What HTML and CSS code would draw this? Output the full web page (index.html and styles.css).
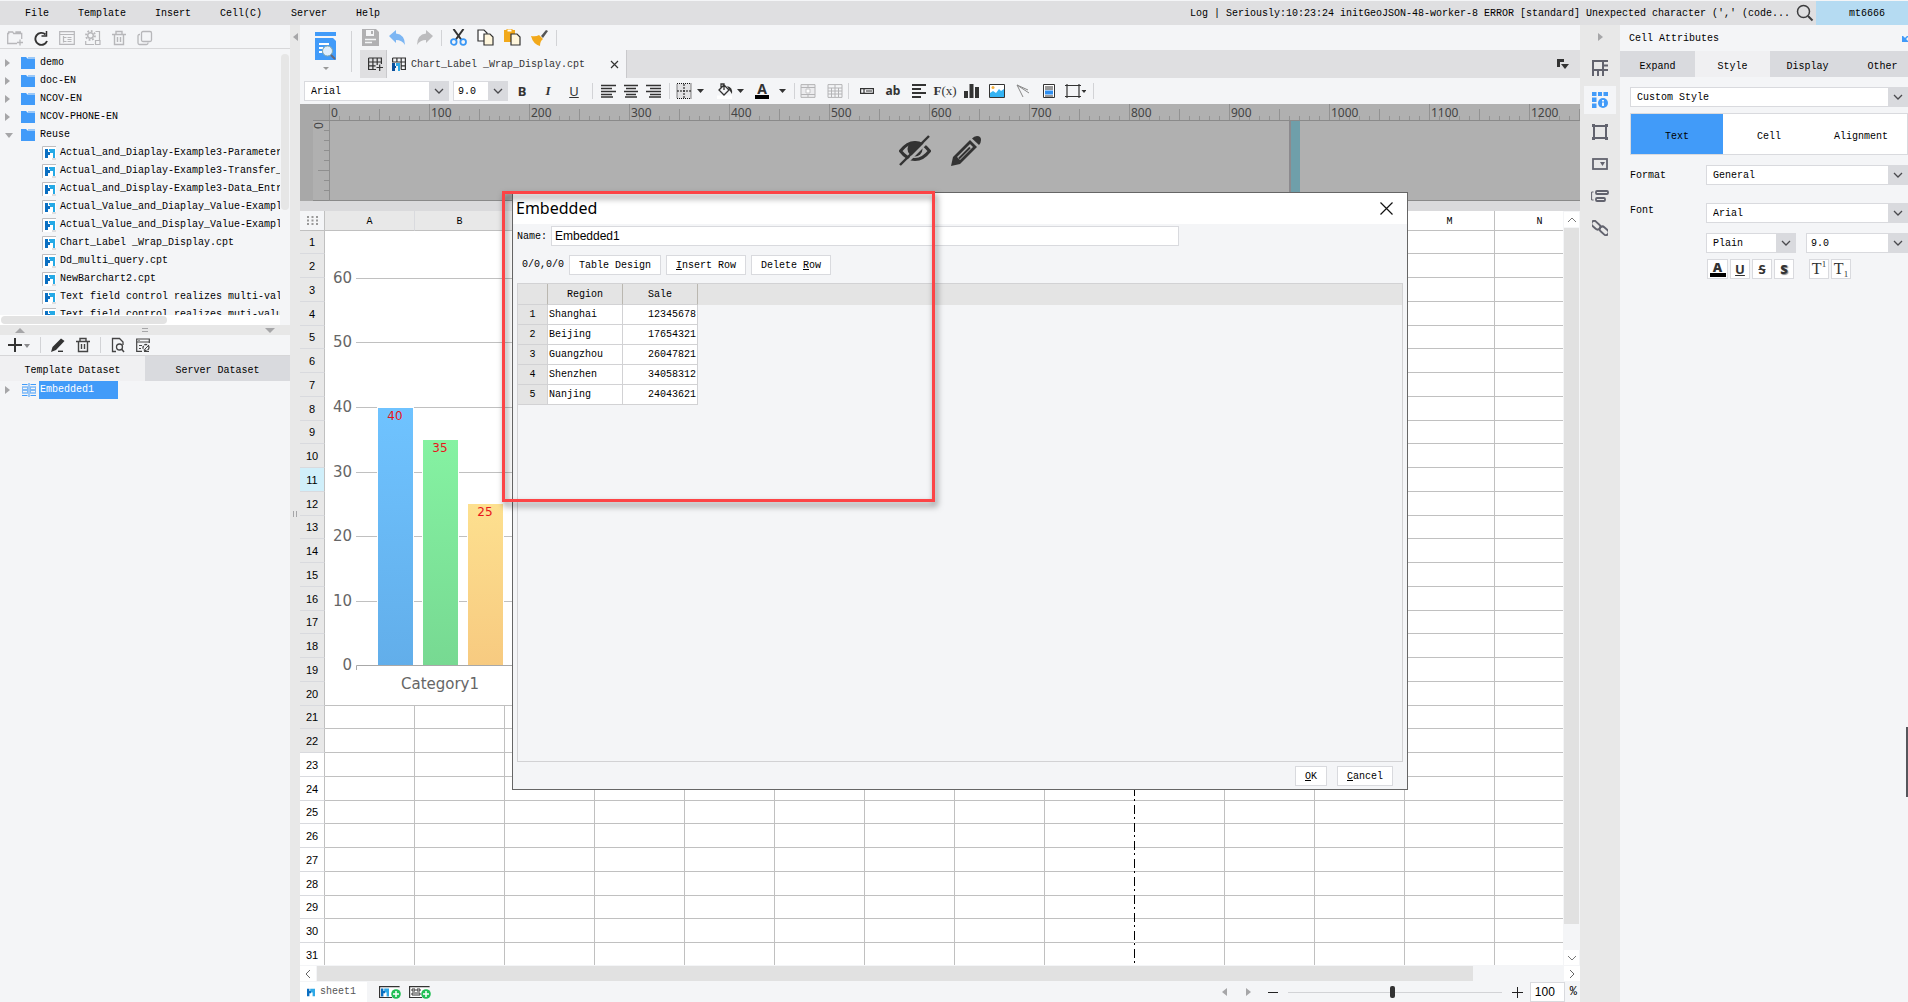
FILE: index.html
```html
<!DOCTYPE html>
<html lang="en">
<head>
<meta charset="utf-8">
<title>Report Designer</title>
<link rel="stylesheet" href="styles.css">
</head>
<body>
<svg class="defs" width="0" height="0" aria-hidden="true">
  <defs>
    <symbol id="folder" viewBox="0 0 14 12"><path d="M0 0h5l2 2h7v10H0z" fill="#419bf9"/><path d="M7 1h7" stroke="#419bf9"/></symbol>
    <symbol id="logo" viewBox="0 0 10 10"><path d="M0 0h3v3h2v3H3v4H0z" fill="#0a6fc2"/><path d="M4 0h6v10H7V5H5V3H4z" fill="#2fa8e6"/></symbol>
    <symbol id="file" viewBox="0 0 14 14"><path d="M0 0h14v14H0z" fill="#fff"/><path d="M.5 14V.5H14M10 13h4" fill="none" stroke="#bdbdc0"/><path d="M3 3h3v3h2v3H6v3H3z" fill="#0a6fc2"/><path d="M7 3h6v9h-2V7H8V5H7z" fill="#25a9e6"/></symbol>
    <symbol id="trash" viewBox="0 0 16 16"><path d="M1 4.500h14M5 4V1.500h6V4M3.500 5v9.500h9V5M6.500 7v5M9.500 7v5" fill="none" stroke="currentColor" stroke-width="1.400"/></symbol>
    <symbol id="chev" viewBox="0 0 10 6"><path d="M1 1l4 4 4-4" fill="none" stroke="#4a4a4e" stroke-width="1.300"/></symbol>
    <symbol id="al" viewBox="0 0 16 14"><path d="M0 1.500h15M0 4.500h11M0 7.500h15M0 10.500h11M0 13h12" stroke="#333" stroke-width="1.300"/></symbol>
    <symbol id="ac" viewBox="0 0 16 14"><path d="M1 1.500h14M3 4.500h10M1 7.500h14M3 10.500h10M2 13h12" stroke="#333" stroke-width="1.300"/></symbol>
    <symbol id="ar" viewBox="0 0 16 14"><path d="M1 1.500h15M5 4.500h11M1 7.500h15M5 10.500h11M4 13h12" stroke="#333" stroke-width="1.300"/></symbol>
    <linearGradient id="blue" x2="0" y2="1"><stop stop-color="#6fc3ff"/><stop offset="1" stop-color="#62aeea"/></linearGradient>
    <linearGradient id="green" x2="0" y2="1"><stop stop-color="#85f2a2"/><stop offset="1" stop-color="#77d992"/></linearGradient>
    <linearGradient id="amber" x2="0" y2="1"><stop stop-color="#fde08f"/><stop offset="1" stop-color="#f7ca80"/></linearGradient>
  </defs>
</svg>
<div class="app">
  <header class="menubar">
    <nav class="menus"><button>File</button><button>Template</button><button>Insert</button><button>Cell(C)</button><button>Server</button><button>Help</button></nav>
    <div class="log">Log | Seriously:10:23:24 initGeoJSON-48-worker-8 ERROR [standard] Unexpected character (',' (code...</div>
    <button class="search" aria-label="Search"><svg width="18" height="18" viewBox="0 0 18 18"><circle cx="7.500" cy="7.500" r="6" fill="none" stroke="#3c3c3e" stroke-width="1.500"/><path d="M12 12l4.500 4.500" stroke="#3c3c3e" stroke-width="2"/></svg></button>
    <button class="user">mt6666</button>
  </header>

  <div class="workspace">
    <aside class="side">
      <div class="side-tools muted">
        <button aria-label="New folder"><svg width="16" height="16" viewBox="0 0 16 16"><path d="M10 13.500H.7V3.500h1V2h4l1 1.500h8V9M10 12.500h6M13 9.500v6M9 3v-1h5" fill="none" stroke="currentColor" stroke-width="1.300"/></svg></button>
        <button class="dark" aria-label="Refresh"><svg width="16" height="16" viewBox="0 0 16 16"><path d="M12.500 4.500A6 6 0 1 0 14 11" fill="none" stroke="currentColor" stroke-width="1.900"/><path d="M13.500 1v5H8.500" fill="none" stroke="currentColor" stroke-width="1.500"/></svg></button>
        <button aria-label="Show in folder"><svg width="16" height="16" viewBox="0 0 16 16"><path d="M.7 1.700h14.600v12.600H.7zM.7 4.500h14.600M4.500 6v6.500M4.500 7.500h3M4.500 11.500h3M8.500 7.500h4M8.500 11.500h4M8.500 9.500h4" fill="none" stroke="currentColor" stroke-width="1.200"/></svg></button>
        <button aria-label="Rename"><svg width="16" height="16" viewBox="0 0 16 16"><circle cx="5.500" cy="5.500" r="2.800" fill="none" stroke="currentColor" stroke-width="1.400"/><circle cx="5.500" cy="5.500" r="4.500" fill="none" stroke="currentColor" stroke-width="1.800" stroke-dasharray="1.800 1.700"/><path d="M10.500 1.500h4v9M.7 11v3.500H9M10.500 10.500h4.500v4h-4.500z" fill="none" stroke="currentColor" stroke-width="1.200"/></svg></button>
        <button aria-label="Delete"><svg width="16" height="16"><use href="#trash"/></svg></button>
        <button aria-label="Copy"><svg width="16" height="16" viewBox="0 0 16 16"><rect x="4.500" y="1.500" width="10" height="10" rx="1.500" fill="none" stroke="currentColor" stroke-width="1.300"/><path d="M3 4.500h-.5q-1.500 0-1.500 1.500v7q0 1.500 1.500 1.500h7q1.500 0 1.500-1.500v-.5" fill="none" stroke="currentColor" stroke-width="1.300"/></svg></button>
      </div>
      <div class="tree-area">
        <ul class="tree">
          <li><i class="tri"></i><svg width="14" height="12"><use href="#folder"/></svg><span>demo</span></li>
          <li><i class="tri"></i><svg width="14" height="12"><use href="#folder"/></svg><span>doc-EN</span></li>
          <li><i class="tri"></i><svg width="14" height="12"><use href="#folder"/></svg><span>NCOV-EN</span></li>
          <li><i class="tri"></i><svg width="14" height="12"><use href="#folder"/></svg><span>NCOV-PHONE-EN</span></li>
          <li><i class="tri open"></i><svg width="14" height="12"><use href="#folder"/></svg><span>Reuse</span></li>
          <li class="leaf"><svg width="14" height="14"><use href="#file"/></svg><span>Actual_and_Diaplay-Example3-Parameter</span></li>
          <li class="leaf"><svg width="14" height="14"><use href="#file"/></svg><span>Actual_and_Diaplay-Example3-Transfer_</span></li>
          <li class="leaf"><svg width="14" height="14"><use href="#file"/></svg><span>Actual_and_Display-Example3-Data_Entry</span></li>
          <li class="leaf"><svg width="14" height="14"><use href="#file"/></svg><span>Actual_Value_and_Diaplay_Value-Example</span></li>
          <li class="leaf"><svg width="14" height="14"><use href="#file"/></svg><span>Actual_Value_and_Display_Value-Example</span></li>
          <li class="leaf"><svg width="14" height="14"><use href="#file"/></svg><span>Chart_Label _Wrap_Display.cpt</span></li>
          <li class="leaf"><svg width="14" height="14"><use href="#file"/></svg><span>Dd_multi_query.cpt</span></li>
          <li class="leaf"><svg width="14" height="14"><use href="#file"/></svg><span>NewBarchart2.cpt</span></li>
          <li class="leaf"><svg width="14" height="14"><use href="#file"/></svg><span>Text field control realizes multi-value</span></li>
          <li class="leaf"><svg width="14" height="14"><use href="#file"/></svg><span>Text field control realizes muti-value</span></li>
        </ul>
        <div class="tree-v"></div>
        <div class="tree-h"></div>
      </div>
      <div class="splitter"><i class="up"></i><i class="grip"></i><i class="down"></i></div>
      <div class="data-tools">
        <button aria-label="Add dataset"><svg width="24" height="16" viewBox="0 0 24 16"><path d="M1 8h14M8 1v14" stroke="#333" stroke-width="2"/><path d="M17 7h6l-3 4z" fill="#8a8a8c"/></svg></button>
        <i class="sep"></i>
        <button aria-label="Edit"><svg width="16" height="16" viewBox="0 0 16 16"><path d="M1 15l1.500-5L11 1.500 14.500 4 6 13z" fill="#333"/><path d="M8 14.300h5" stroke="#333" stroke-width="1.400"/></svg></button>
        <button aria-label="Delete dataset"><svg width="16" height="16" class="ink"><use href="#trash"/></svg></button>
        <i class="sep"></i>
        <button aria-label="Preview"><svg width="16" height="16" viewBox="0 0 16 16"><path d="M6 14.500H2.500v-13h7l3.500 3.500v3" fill="none" stroke="#444" stroke-width="1.300"/><circle cx="9.500" cy="10" r="3" fill="none" stroke="#444" stroke-width="1.300"/><path d="M11.500 12l2.500 3" stroke="#444" stroke-width="1.500"/></svg></button>
        <button aria-label="Manage"><svg width="16" height="16" viewBox="0 0 16 16"><path d="M7 14.300H1.700V2h12.600v4M2 5h12M4 8.500h3M4 11.500h2M3.500 3.500h1" fill="none" stroke="#444" stroke-width="1.200"/><circle cx="11" cy="10.500" r="3" fill="none" stroke="#444" stroke-width="1.300" stroke-dasharray="3 1"/><path d="M9 14.500h5M10 12l4-4" stroke="#444"/></svg></button>
      </div>
      <div class="data-tabs"><button class="on">Template Dataset</button><button>Server Dataset</button></div>
      <ul class="tree datasets"><li><i class="tri"></i><svg width="14" height="14" viewBox="0 0 14 14"><path d="M0 1.500h5.500M8.500 1.500H14M7 0v14M0 12.500h5.500M8.500 12.500H14M0 4h6M8 4h6M0 10h6M8 10h6" stroke="#419bf9"/><path d="M1 6h4v2H1zM9 6h4v2H9zM0 4h1v6H0zM5 4h1v6H5zM8 4h1v6H8zM13 4h1v6h-1z" fill="#7db8f5"/></svg><span class="picked">Embedded1</span></li></ul>
    </aside>
    <div class="gutter"><i class="tri left"></i><i class="vgrip"></i></div>

    <main class="main">
      <div class="top">
        <button class="preview" aria-label="Preview template"><svg width="22" height="42" viewBox="0 0 22 42"><path d="M0 0h21v4H0zM0 6h21v22H0z" fill="#419bf9"/><path d="M17 5l5 5v-5z" fill="#f4f5f7"/><path d="M4 12h10M4 16h4M4 20h3" stroke="#fff" stroke-width="2"/><circle cx="12.500" cy="19" r="5" fill="#dfeefd" stroke="#8aa" /><path d="M16 23l4 4" stroke="#667" stroke-width="2"/><path d="M8 35h6l-3 3z" fill="#999"/></svg></button>
        <div class="top-right">
          <div class="quick">
            <button aria-label="Save"><svg width="17" height="17" viewBox="0 0 17 17"><path d="M0 0h14l3 3v14H0z" fill="#b0b0b2"/><path d="M4 1h8v6H4z" fill="#f4f5f7"/><path d="M9 2h2v3H9z" fill="#b0b0b2"/><path d="M3 10.500h11M3 13.500h7" stroke="#f4f5f7" stroke-width="1.500"/></svg></button>
            <button aria-label="Undo"><svg width="17" height="17" viewBox="0 0 17 17"><path d="M0 7l7-6v3.500q9 1 9 11.500-3-5-9-5V14z" fill="#7cb6f3"/></svg></button>
            <button aria-label="Redo"><svg width="17" height="17" viewBox="0 0 17 17"><path d="M17 7l-7-6v3.500Q1 5.500 1 16q3-5 9-5v3z" fill="#bcbcbe"/></svg></button>
            <i class="sep"></i>
            <button aria-label="Cut"><svg width="17" height="17" viewBox="0 0 17 17"><path d="M3.500 0l8 11M13.500 0l-8 11" stroke="#333" stroke-width="2"/><circle cx="3.800" cy="13" r="2.800" fill="none" stroke="#3a97f5" stroke-width="1.800"/><circle cx="13.200" cy="13" r="2.800" fill="none" stroke="#3a97f5" stroke-width="1.800"/></svg></button>
            <button aria-label="Copy cells"><svg width="17" height="17" viewBox="0 0 17 17"><path d="M1 1h6l3 3v8H1z" fill="#fff" stroke="#333" stroke-width="1.200"/><path d="M7 5h6l3 3v8H7z" fill="#fff6dc" stroke="#333" stroke-width="1.200"/></svg></button>
            <button aria-label="Paste"><svg width="17" height="17" viewBox="0 0 17 17"><path d="M0 1h11v12H0z" fill="#f2a91b"/><path d="M3 0h5v3H3z" fill="#fff" stroke="#f2a91b"/><path d="M7 5h6l3 3v8H7z" fill="#fff6dc" stroke="#333" stroke-width="1.200"/></svg></button>
            <button aria-label="Format brush"><svg width="17" height="17" viewBox="0 0 17 17"><path d="M10 7l5-6 2 1-5 7z" fill="#555"/><path d="M0 7q5 1 8-1l4 4q-3 2-3 7-7-2-9-10z" fill="#f2a91b"/></svg></button>
            <i class="sep"></i>
          </div>
          <div class="tabs">
            <button class="new" aria-label="New template"><svg width="15" height="14" viewBox="0 0 15 14"><path d="M.6 1h12.800v6M.6 1v11.500H8M.6 5h12.800M.6 8.800h7M4.900 1v11.500M9.200 1v7M8.500 10.500H15M11.700 7.500V14" fill="none" stroke="#333" stroke-width="1.200"/></svg></button>
            <div class="tab"><svg width="14" height="14" viewBox="0 0 14 14"><path d="M.6 1h12.800v11.500H9M.6 1v4.500M.6 5h12.800M9 8.800h4.500M4.900 1v4M9.200 1v11.500" fill="none" stroke="#333" stroke-width="1.200"/><path d="M0 6h3v3h1v2H3v3H0z" fill="#0a4f9c"/><path d="M4 6h4v8H6V9H4z" fill="#2fa8e6"/></svg><span>Chart_Label _Wrap_Display.cpt</span><button aria-label="Close tab"><svg width="9" height="9" viewBox="0 0 9 9"><path d="M1 1l7 7M8 1L1 8" stroke="#333" stroke-width="1.200"/></svg></button></div>
            <button class="more" aria-label="Tab list"><svg width="12" height="10" viewBox="0 0 12 10"><path d="M0 0h7v3H3v5H0z" fill="#333"/><path d="M4 5h8L8 10z" fill="#333"/></svg></button>
          </div>
        </div>
      </div>

      <div class="format">
        <span class="pick font"><select aria-label="Font family"><option>Arial</option></select><svg width="10" height="6"><use href="#chev"/></svg></span>
        <span class="pick size"><select aria-label="Font size"><option>9.0</option></select><svg width="10" height="6"><use href="#chev"/></svg></span>
        <button class="c26 glyph"><b>B</b></button><button class="c26 glyph serif"><em>I</em></button><button class="c26 glyph"><u>U</u></button>
        <i class="sep"></i>
        <button class="c22" aria-label="Align left"><svg width="16" height="14"><use href="#al"/></svg></button><button class="c22" aria-label="Align centre"><svg width="16" height="14"><use href="#ac"/></svg></button><button class="c22" aria-label="Align right"><svg width="16" height="14"><use href="#ar"/></svg></button>
        <i class="sep"></i>
        <div class="drops">
          <button aria-label="Borders"><svg width="34" height="16" viewBox="0 0 34 16"><path d="M2 .5h14v15H2z" fill="#e2e2e4" stroke="#111" stroke-dasharray="1 1"/><path d="M9 1v14M2 8h14" stroke="#111" stroke-dasharray="2 1"/><path d="M22 6h7l-3.500 4z" fill="#333"/></svg></button>
          <button aria-label="Fill colour"><svg width="34" height="16" viewBox="0 0 34 16"><path d="M2 12.500h15V16H2z" fill="#fff"/><path d="M4 7l5-5 5 5-5 5zM6 5V1h3v6" fill="none" stroke="#333" stroke-width="1.300"/><path d="M12 3q6 1 5 8l-2-3z" fill="#333"/><path d="M22 6h7l-3.500 4z" fill="#333"/></svg></button>
          <button class="fontcolor" aria-label="Font colour"><b>A</b><svg width="12" height="4" viewBox="0 0 12 4"><path d="M2 0h7L5.500 4z" fill="#333"/></svg></button>
        </div>
        <i class="sep"></i>
        <div class="pair">
          <button aria-label="Merge cells"><svg width="16" height="14" viewBox="0 0 16 14"><path d="M1 .6h14v12.800H1zM1 3.500h14M1 10.500h14M8 1v2M8 11v2" fill="#ececee" stroke="#b4b4b6"/><path d="M6 5h4v4H6z" fill="#fff" stroke="#c4c4c6"/></svg></button>
          <button aria-label="Unmerge cells"><svg width="16" height="14" viewBox="0 0 16 14"><path d="M1 .6h14v12.800H1zM1 4h14M1 7h14M1 10h14M4.500 4v9M8 1v12M11.500 4v9" fill="none" stroke="#b4b4b6"/></svg></button>
        </div>
        <i class="sep"></i>
        <button class="c26" aria-label="Widget"><svg width="14" height="6" viewBox="0 0 14 6"><path d="M.6.6h12.800v4.800H.6zM4 .6v4.800M6 3h6" fill="none" stroke="#333" stroke-width="1.200"/></svg></button>
        <button class="c26 glyph ab"><b>ab</b></button>
        <button class="c26" aria-label="Rich text"><svg width="16" height="14" viewBox="0 0 16 14"><path d="M1 1h14M1 5h9M1 9h14M1 13h9" stroke="#333" stroke-width="2"/></svg></button>
        <button class="c26 glyph serif fx"><b>F</b>(x)</button>
        <button class="c26" aria-label="Chart"><svg width="15" height="14" viewBox="0 0 15 14"><path d="M0 7h4v7H0zM5.500 0h4v14h-4zM11 3h4v11h-4z" fill="#333"/></svg></button>
        <button class="c26" aria-label="Image"><svg width="16" height="14" viewBox="0 0 16 14"><path d="M.5.5h15v13H.5z" fill="#fff" stroke="#333"/><path d="M1 13V9l3-2 3 2 3-4 2 2 3-2v8z" fill="#34b4f4"/><circle cx="4" cy="3.500" r="1.500" fill="#f5b13c"/></svg></button>
        <button class="c26" aria-label="Slope line"><svg width="15" height="14" viewBox="0 0 15 14"><path d="M1 1l6 12M1 1l12 8M1 1l11 5" fill="none" stroke="#888"/></svg></button>
        <button class="c26" aria-label="Subreport"><svg width="12" height="14" viewBox="0 0 12 14"><path d="M.5.5h11v13H.5z" fill="#fff" stroke="#333"/><path d="M2 3h8M2 5h8M2 12h8" stroke="#333"/><path d="M2 6.500h8v4H2z" fill="#2f8ff0"/></svg></button>
        <button class="c26" aria-label="Frame"><svg width="22" height="16" viewBox="0 0 22 16"><path d="M3 1v14M15 1v14M1 2.500h16M1 13.500h16" stroke="#333" stroke-width="1.200"/><path d="M17.500 7h5l-2.500 3z" fill="#333"/></svg></button>
        <i class="sep"></i>
      </div>

      <div class="canvas">
        <svg class="hruler" height="17" aria-hidden="true">
          <defs><pattern id="hticks" x="29" y="0" width="100" height="17" patternUnits="userSpaceOnUse"><path d="M.5 0v17M10.500 12v5M20.500 12v5M30.500 12v5M40.500 12v5M50.500 5v12M60.500 12v5M70.500 12v5M80.500 12v5M90.500 12v5" stroke="#929292"/></pattern></defs>
          <rect width="29" height="17" fill="#a8a8a8"/><rect x="29" width="100%" height="17" fill="url(#hticks)"/><path d="M13 16.500h2000" stroke="#8a8a8a"/>
          <g id="marks" class="marks"></g>
        </svg>
        <div class="params">
          <svg class="vruler" width="30" height="80" viewBox="0 0 30 80" aria-hidden="true"><path d="M0 0h13v80H0z" fill="#a8a8a8"/><path d="M24 9.500h5M24 19.500h5M24 29.500h5M24 39.500h5M18 49.500h11M24 59.500h5M24 69.500h5M29.500 0v80" stroke="#8f8f8f"/><text x="-8" y="23" transform="rotate(-90)">0</text></svg>
          <div class="pane">
            <button aria-label="Hide parameter pane"><svg width="32" height="32" viewBox="0 0 32 32"><path d="M1.500 16Q8 7.500 16 7.500T30.500 16Q24 24.500 16 24.500T1.500 16z" fill="none" stroke="#333" stroke-width="3"/><circle cx="16" cy="14" r="7.500" fill="#333"/><path d="M3 32L32 3" stroke="#b0b0b0" stroke-width="3"/><path d="M1 30L30 1" stroke="#333" stroke-width="2.400"/></svg></button>
            <button aria-label="Edit parameter pane"><svg width="32" height="32" viewBox="0 0 32 32"><path d="M1 31l2-9L20 5l7 7-17 17z" fill="#333"/><path d="M7 22L20 9l3 3L10 25z" fill="#b0b0b0"/><path d="M9 23.500l11-11" stroke="#333" stroke-width="2"/><path d="M22 3.500Q24 1 27 1q4 0 4 4 0 3-2 5z" fill="#333"/></svg></button>
          </div>
          <i class="handle"></i>
        </div>
      </div>
      <div class="band"></div>

      <div class="sheet-area">
        <div class="sheet">
          <table id="grid"><thead></thead><tbody></tbody></table>
          <i class="page-break"></i>
        </div>
        <div class="vscroll"><button aria-label="Scroll up"><svg width="10" height="6" viewBox="0 0 10 6"><path d="M1 5l4-4 4 4" fill="none" stroke="#777"/></svg></button><i></i><button aria-label="Scroll down"><svg width="10" height="6" viewBox="0 0 10 6"><path d="M1 1l4 4 4-4" fill="none" stroke="#777"/></svg></button></div>
      </div>
      <div class="hscroll"><button aria-label="Scroll left"><svg width="6" height="10" viewBox="0 0 6 10"><path d="M5 1L1 5l4 4" fill="none" stroke="#666"/></svg></button><i></i><button aria-label="Scroll right"><svg width="6" height="10" viewBox="0 0 6 10"><path d="M1 1l4 4-4 4" fill="none" stroke="#666"/></svg></button></div>
      <footer class="sheetbar">
        <button class="sheet-tab"><svg width="8" height="9" viewBox="0 0 10 10"><use href="#logo" width="10" height="10"/></svg>sheet1</button>
        <button aria-label="Add report sheet"><svg width="22" height="13" viewBox="0 0 22 13"><path d="M13 11.500H.6V.6h20" fill="#fff" stroke="#333" stroke-width="1.200"/><use href="#logo" x="2" y="2" width="8" height="9"/><circle cx="17" cy="8" r="4.800" fill="#21bf55"/><path d="M14 8h6M17 5v6" stroke="#fff" stroke-width="1.500"/></svg></button>
        <button aria-label="Add aggregation sheet"><svg width="22" height="13" viewBox="0 0 22 13"><path d="M13 11.500H.6V.6h20" fill="#fff" stroke="#333" stroke-width="1.200"/><path d="M3 3h3v2H3zM8 3h3v2H8zM3 7h8v2H3z" fill="none" stroke="#333"/><circle cx="17" cy="8" r="4.800" fill="#21bf55"/><path d="M14 8h6M17 5v6" stroke="#fff" stroke-width="1.500"/></svg></button>
        <div class="zoom">
          <button aria-label="Previous sheet"><i class="tri left"></i></button><button aria-label="Next sheet"><i class="tri"></i></button>
          <button aria-label="Zoom out"><svg width="10" height="10" viewBox="0 0 10 10"><path d="M0 5.500h10" stroke="#222"/></svg></button>
          <input type="range" min="0" max="200" value="98" aria-label="Zoom">
          <button aria-label="Zoom in"><svg width="11" height="11" viewBox="0 0 11 11"><path d="M0 5.500h11M5.500 0v11" stroke="#222"/></svg></button>
          <input type="text" id="pct" value="100"><label for="pct">%</label>
        </div>
      </footer>
    </main>

    <nav class="rail">
      <i class="tri"></i>
      <button aria-label="Cell element"><svg width="16" height="16" viewBox="0 0 16 16"><path d="M1 1h10v9H1zM11 1h5M11 5.500h5M11 10h5M1 10v6M6 10v6M11 10v6" fill="none" stroke="#62636e" stroke-width="2"/></svg></button>
      <button class="on" aria-label="Cell attributes"><svg width="16" height="16" viewBox="0 0 16 16"><path d="M0 0h4.500v4H0zM6 0h4v4H6zM11.500 0H16v4h-4.500zM0 5.500h4.500V10H0zM0 11.500h4.500V16H0z" fill="#419bf9"/><circle cx="11" cy="11" r="5" fill="#419bf9"/><path d="M11 8v1.500M11 10.500v3.500" stroke="#fff" stroke-width="1.800"/></svg></button>
      <button aria-label="Float element"><svg width="16" height="16" viewBox="0 0 16 16"><path d="M2 2h12v12H2z" fill="none" stroke="#62636e" stroke-width="2"/><path d="M0 0h3v3H0zM13 0h3v3h-3zM0 13h3v3H0zM13 13h3v3h-3z" fill="#62636e"/></svg></button>
      <button aria-label="Widget settings"><svg width="16" height="12" viewBox="0 0 16 12"><rect x="1" y="1" width="14" height="10" fill="none" stroke="#62636e" stroke-width="1.800"/><path d="M8 4h5l-2.500 4z" fill="#62636e"/></svg></button>
      <button aria-label="Conditions"><svg width="18" height="12" viewBox="0 0 18 12"><path d="M2.500 2H.6v8h2" fill="none" stroke="#62636e"/><rect x="5" y="1" width="12" height="3" rx="1" fill="none" stroke="#62636e" stroke-width="1.800"/><rect x="5" y="8" width="9" height="3" rx="1" fill="none" stroke="#62636e" stroke-width="1.800"/></svg></button>
      <button aria-label="Hyperlink"><svg width="16" height="16" viewBox="0 0 16 16"><g fill="none" stroke="#62636e" stroke-width="1.900"><rect x="-1" y="2.500" width="10" height="5.500" rx="2.700" transform="rotate(42 4 5)"/><rect x="7" y="8" width="10" height="5.500" rx="2.700" transform="rotate(42 12 11)"/></g></svg></button>
    </nav>

    <aside class="attrs">
      <h2>Cell Attributes<svg width="6" height="6" viewBox="0 0 6 6"><path d="M0 0v6h6zM2 4l4-4" fill="#419bf9" stroke="#419bf9" stroke-width="1.500"/></svg></h2>
      <div class="attr-tabs"><button>Expand</button><button class="on">Style</button><button>Display</button><button>Other</button></div>
      <div class="attr-body">
        <span class="pick"><select aria-label="Style"><option>Custom Style</option></select><svg width="10" height="6"><use href="#chev"/></svg></span>
        <div class="seg"><button class="on">Text</button><button>Cell</button><button>Alignment</button></div>
        <div class="field format-row"><label for="fmt">Format</label><span class="pick"><select id="fmt"><option>General</option></select><svg width="10" height="6"><use href="#chev"/></svg></span></div>
        <div class="field"><label for="fnt">Font</label>
          <div class="stack">
            <span class="pick"><select id="fnt"><option>Arial</option></select><svg width="10" height="6"><use href="#chev"/></svg></span>
            <div class="split">
              <span class="pick"><select aria-label="Weight"><option>Plain</option></select><svg width="10" height="6"><use href="#chev"/></svg></span>
              <span class="pick wide"><select aria-label="Size"><option>9.0</option></select><svg width="10" height="6"><use href="#chev"/></svg></span>
            </div>
            <div class="marks-row"><button class="a"><b>A</b></button><button><u>U</u></button><button><s>S</s></button><button class="shadow"><b>S</b></button><button class="t first">T<sup>1</sup></button><button class="t">T<sub>1</sub></button></div>
          </div>
        </div>
      </div>
      <i class="edge"></i>
    </aside>
  </div>

  <section class="dialog" role="dialog" aria-label="Embedded">
    <header><h1>Embedded</h1><button aria-label="Close"><svg width="13" height="13" viewBox="0 0 13 13"><path d="M.5.5l12 12M12.500.5l-12 12" stroke="#111" stroke-width="1.200"/></svg></button></header>
    <div class="name"><label for="nm">Name:</label><input id="nm" type="text" value="Embedded1"></div>
    <div class="ops"><span>0/0,0/0</span><button class="w92">Table Design</button><button><u>I</u>nsert Row</button><button>Delete <u>R</u>ow</button></div>
    <div class="data">
      <table>
        <thead><tr><th></th><th>Region</th><th>Sale</th></tr></thead>
        <tbody>
          <tr><th>1</th><td>Shanghai</td><td>12345678</td></tr>
          <tr><th>2</th><td>Beijing</td><td>17654321</td></tr>
          <tr><th>3</th><td>Guangzhou</td><td>26047821</td></tr>
          <tr><th>4</th><td>Shenzhen</td><td>34058312</td></tr>
          <tr><th>5</th><td>Nanjing</td><td>24043621</td></tr>
        </tbody>
      </table>
    </div>
    <div class="actions"><button><u>O</u>K</button><button><u>C</u>ancel</button></div>
  </section>
  <div class="callout"></div>
</div>

<template id="chart">
  <svg class="chart" width="539" height="474" viewBox="0 1 539 474" role="img" aria-label="Bar chart">
    <path d="M31 47.500h508M31 111.500h508M31 176.500h508M31 241.500h508M31 305.500h508M31 370.500h508" stroke="#c0c0c0"/>
    <path d="M52 176h37v258H52zM97 208h37v226H97zM142 272h37v162h-37z" fill="#fff"/>
    <path d="M53 177h35v258H53z" fill="url(#blue)"/><path d="M98 209h35v226H98z" fill="url(#green)"/><path d="M143 273h35v162h-35z" fill="url(#amber)"/>
    <path d="M31.500 439v-4.500H539" fill="none" stroke="#a8a8a8"/>
    <g class="axis"><text x="27" y="52">60</text><text x="27" y="116">50</text><text x="27" y="181">40</text><text x="27" y="246">30</text><text x="27" y="310">20</text><text x="27" y="375">10</text><text x="27" y="439">0</text></g>
    <g class="values"><text x="70" y="189">40</text><text x="115" y="221">35</text><text x="160" y="285">25</text></g>
    <text class="cat" x="115" y="458">Category1</text>
  </svg>
</template>
<script src="script.js"></script>
</body>
</html>
```
FILE: styles.css
```css
* { box-sizing: border-box; }
html, body { height: 100%; margin: 0; }
body { font: 10px/12px "Liberation Mono", monospace; color: #000; background: #f4f5f7; overflow: hidden; }
button, input, select { font: inherit; color: inherit; margin: 0; padding: 0; border: 0; background: none; border-radius: 0; }
button { display: flex; align-items: center; justify-content: center; white-space: nowrap; flex: none; }
svg { display: block; flex: none; }
ul { margin: 0; padding: 0; list-style: none; }
h1, h2 { margin: 0; font-weight: 400; }
.defs { position: absolute; }
.app { position: relative; height: 100vh; display: flex; flex-direction: column; border-top: 1px solid #f4f5f7; }
.sep { width: 1px; height: 16px; background: #d2d3d6; flex: none; }
.tri { width: 0; height: 0; border: 4px solid transparent; border-left: 5px solid #a6a6a8; border-right: 0; flex: none; }
.tri.left { border-left: 0; border-right: 5px solid #a6a6a8; }
.tri.open { border: 4px solid transparent; border-top: 5px solid #a6a6a8; border-bottom: 0; }

/* menu bar */
.menubar { height: 24px; background: #dfdfe1; display: flex; align-items: center; flex: none; }
.menus { display: flex; gap: 29px; padding: 2px 0 0 25px; flex: 1; }
.log { margin-right: 5px; padding-top: 2px; white-space: pre; }
.search { width: 20px; margin-right: 1px; }
.user { width: 92px; height: 24px; background: #b5dbf2; padding: 2px 0 0 10px; }
.workspace { flex: 1; display: flex; min-height: 0; }

/* left side */
.side { width: 290px; flex: none; display: flex; flex-direction: column; }
.side-tools { height: 24px; display: flex; align-items: center; gap: 10px; padding: 2px 0 0 7px; border-bottom: 1px solid #d8d8da; flex: none; }
.muted { color: #b7b7ba; }
.dark { color: #333; }
.ink { color: #444; }
.tree-area { height: 276px; position: relative; padding-top: 5px; overflow: hidden; flex: none; }
.tree { width: 280px; overflow: hidden; }
.tree-area .tree { height: 261px; }
.tree li { height: 18px; display: flex; align-items: center; padding-left: 5px; white-space: pre; }
.tree .tri { margin-right: 11px; }
.tree .tri.open { margin-right: 8px; }
.tree span { margin-left: 5px; }
.tree .leaf { padding-left: 42px; }
.tree .leaf span { margin-left: 4px; }
.tree-v { position: absolute; right: 1px; top: 5px; width: 8px; height: 156px; border-radius: 4px; background: #e6e6e6; }
.tree-h { position: absolute; left: 0; right: 10px; bottom: 0; height: 10px; background: #fff; }
.tree-h::before { content: ""; display: block; width: 166px; height: 8px; margin: 1px; border-radius: 4px; background: #e3e3e3; }
.splitter { height: 10px; background: #e7e7e7; display: flex; justify-content: space-between; align-items: center; padding: 0 15px; flex: none; }
.up, .down { border: 5px solid transparent; border-bottom-color: #a6a6a8; border-top: 0; }
.down { border-bottom: 0; border-top: 5px solid #a6a6a8; }
.grip { width: 6px; height: 4px; border: 1px solid #a6a6a8; border-width: 1px 0; }
.data-tools { height: 21px; display: flex; align-items: center; gap: 9px; padding-left: 7px; border-bottom: 1px solid #d6d6d8; flex: none; }
.data-tabs { display: flex; height: 25px; flex: none; }
.data-tabs button { flex: 1; background: #d9dade; padding-top: 5px; }
.data-tabs .on { background: #f0f0f2; }
.datasets .tri { margin-right: 12px; }
.datasets .picked { background: #419bf9; color: #fff; width: 79px; line-height: 18px; margin-left: 3px; padding-left: 1px; }
.gutter { width: 10px; background: #e8e8e8; flex: none; position: relative; display: flex; flex-direction: column; justify-content: center; align-items: center; }
.gutter .tri { position: absolute; top: 8px; left: 3px; }
.vgrip { width: 4px; height: 6px; border: 1px solid #a6a6a8; border-width: 0 1px; }

/* top tool rows */
.main { flex: 1; min-width: 0; display: flex; flex-direction: column; }
.top { height: 53px; display: flex; flex: none; }
.preview { width: 52px; position: relative; align-items: flex-start; padding-top: 7px; border-right: 0; }
.preview::after { content: ""; position: absolute; right: 0; top: 6px; bottom: 6px; width: 1px; background: #d2d3d6; }
.top-right { flex: 1; padding-left: 8px; display: flex; flex-direction: column; }
.quick { height: 25px; display: flex; align-items: center; margin-left: -3px; flex: none; }
.quick button { width: 27px; }
.quick .sep { margin: 0 3px; }
.tabs { flex: 1; display: flex; background: #dfdfe1; }
.new { width: 27px; border-right: 1px solid #c9c9cc; padding-left: 4px; }
.tab { width: 240px; background: #f4f5f7; border-right: 1px solid #c9c9cc; display: flex; align-items: center; padding: 0 7px 0 5px; color: #333; }
.tab span { margin-left: 5px; padding-top: 2px; flex: 1; white-space: pre; }
.more { margin-left: auto; padding-right: 11px; }
.format { height: 26px; display: flex; align-items: center; padding-left: 4px; flex: none; }
.format > .sep { margin: 0 5px; }
.pick { position: relative; display: flex; height: 20px; }
.pick select { appearance: none; width: 100%; height: 20px; padding: 1px 26px 0 6px; border: 1px solid #d9dade; background: linear-gradient(#d9dade, #d9dade) right / 19px 20px no-repeat #fff; }
.pick svg { position: absolute; right: 5px; top: 7px; pointer-events: none; }
.font { width: 145px; margin-right: 4px; }
.size { width: 55px; margin-right: 1px; }
.size select { padding-left: 4px; }
.c26 { width: 26px; height: 20px; }
.c22 { width: 22px; height: 20px; }
.glyph { font: 13px/16px "Noto Sans", sans-serif; color: #333; }
.serif { font-family: "Liberation Serif", serif; font-weight: 700; }
.ab { font-size: 12px; }
.fx { font-size: 13px; font-weight: 400; }
.drops { display: flex; gap: 6px; }
.fontcolor { width: 34px; height: 16px; justify-content: flex-start; gap: 8px; }
.fontcolor b { width: 16px; height: 16px; border-bottom: 4px solid #000; font: 700 14px/12px "Noto Sans", sans-serif; text-align: center; color: #333; }
.pair { display: flex; gap: 11px; }

/* parameter canvas */
.canvas { flex: none; background: #b0b0b0; }
.hruler { width: 100%; }
.marks, .vruler text { font: 12px "Noto Sans", sans-serif; fill: #444; }
.params { height: 80px; display: flex; border-bottom: 1px solid #8a8a8a; }
.pane { width: 961px; display: flex; justify-content: center; align-items: flex-start; gap: 19px; padding: 14px 0 0 262px; border-right: 2px solid #8c8a8e; }
.handle { width: 9px; background: #6f9faa; }
.band { height: 10px; background: #dadadc; flex: none; }

/* sheet */
.sheet-area { flex: 1; min-height: 0; display: flex; }
.sheet { flex: 1; min-width: 0; overflow: hidden; position: relative; background: #fff; }
#grid { width: 1285px; table-layout: fixed; border-collapse: separate; border-spacing: 0; }
#grid th, #grid td { padding: 0; border: 1px solid #c0c0c0; border-width: 0 1px 1px 0; font-weight: 400; }
#grid thead tr { height: 20px; }
#grid thead th { width: 90px; padding-top: 3px; background: #fff; }
#grid thead th.used { background: #e8e8e8; border-right-color: #d9dade; }
#grid thead th:first-child { width: 25px; padding-top: 0; background: #f4f5f7; }
#grid thead svg { margin: 0 auto; }
#grid tbody tr { height: 24px; }
#grid tbody tr:nth-child(4n+1) { height: 23px; }
#grid tbody th { font: 11px/12px "Liberation Sans", sans-serif; border-bottom-color: #d9dade; }
#grid tbody th.used { background: #e8e8e8; }
#grid tbody th.current { background: #d0effa; }
.chart { margin-bottom: -1px; }
.chart text { font: 15px "DejaVu Sans", sans-serif; fill: #666; }
.chart .axis text { text-anchor: end; }
.chart .values text { font-size: 12px; fill: #e8151b; text-anchor: middle; }
.chart .cat { text-anchor: middle; }
.page-break { position: absolute; left: 834px; top: 0; bottom: 0; width: 1px; background: repeating-linear-gradient(#000 0 9px, #fff 9px 12px, #000 12px 14px, #fff 14px 18px); }
.vscroll { width: 17px; display: flex; flex-direction: column; padding: 1px 1px 0; }
.vscroll button { height: 15px; background: #fff; }
.vscroll i { height: 696px; margin: 1px 0 auto; background: #e1e1e1; flex: 0 1 auto; }
.hscroll { height: 17px; padding: 1px 0; display: flex; flex: none; }
.hscroll button { width: 16px; background: #fff; }
.hscroll i { flex: 1; margin: 0 91px 0 1px; background: #e1e1e1; }
.sheetbar { height: 20px; display: flex; align-items: center; flex: none; }
.sheet-tab { width: 67px; height: 20px; gap: 5px; padding-right: 4px; background: #fff; color: #555; margin-right: 4px; }
.sheetbar > button + button { margin-left: 8px; }
.zoom { margin-left: auto; display: flex; align-items: center; padding-right: 3px; }
.zoom button { width: 24px; height: 16px; }
.zoom input[type=range] { appearance: none; width: 214px; height: 14px; margin: 0 4px 0 3px; background: linear-gradient(#d2d3d6, #d2d3d6) center / 100% 1px no-repeat; }
.zoom input[type=range]::-webkit-slider-thumb { appearance: none; width: 5px; height: 12px; border-radius: 2px; background: #333; }
.zoom input[type=text] { width: 35px; height: 20px; border: 1px solid #d9dade; background: #fff; padding-left: 4px; font: 12px "Liberation Sans", sans-serif; margin-right: 5px; }
.zoom label { font-size: 12px; }

/* right side */
.rail { width: 40px; background: #e8e8e8; display: flex; flex-direction: column; align-items: center; gap: 4px; padding-top: 8px; flex: none; }
.rail .tri { margin-bottom: 9px; }
.rail button { width: 32px; height: 28px; }
.rail .on { background: #f4f5f7; }
.attrs { width: 288px; flex: none; overflow: hidden; position: relative; }
.attrs h2 { height: 26px; display: flex; align-items: center; justify-content: space-between; padding: 2px 0 0 9px; font-size: 10px; }
.attr-tabs { display: flex; height: 26px; background: #d9dade; }
.attr-tabs button { width: 75px; padding-top: 6px; }
.attr-tabs .on { background: #f0f0f2; }
.attr-body { padding: 10px 0 0 10px; }
.seg { display: flex; height: 42px; border: 1px solid #d9dade; background: #fff; margin-top: 6px; }
.seg button { flex: 1; padding-top: 6px; }
.seg .on { background: #419bf9; }
.field { display: flex; padding-top: 18px; }
.field label { width: 76px; line-height: 16px; flex: none; }
.field > .pick, .stack { flex: 1; }
.format-row { padding-top: 10px; }
.format-row label { line-height: 22px; height: 20px; }
.stack .pick { flex: none; }
.split { display: flex; justify-content: space-between; margin: 10px 0 6px; }
.split .pick { width: 90px; }
.split .wide { width: 102px; }
.split .wide select { padding-left: 4px; }
.marks-row { display: flex; gap: 2px; padding-left: 1px; }
.marks-row button { width: 20px; height: 20px; border: 1px solid #d9dade; background: #fff; font: 700 13px/16px "Noto Sans", sans-serif; color: #333; }
.marks-row .a { width: 21px; }
.marks-row .a b { width: 16px; border-bottom: 4px solid #000; line-height: 12px; }
.marks-row .shadow { text-shadow: 1px 1px 1px #888; }
.marks-row .t { font: 16px/16px "Liberation Serif", serif; }
.marks-row .first { margin-left: 13px; }
.t sup, .t sub { font-size: 9px; line-height: 8px; }
.t sup { align-self: flex-start; }
.t sub { align-self: flex-end; }
.edge { position: absolute; right: 0; top: 702px; width: 2px; height: 70px; background: #55565c; }

/* dialog */
.dialog { position: absolute; left: 512px; top: 191px; width: 896px; height: 598px; background: #f4f5f7; border: 1px solid #666; display: flex; flex-direction: column; }
.dialog header { height: 31px; background: #fff; display: flex; align-items: center; justify-content: space-between; padding: 0 14px 0 3px; flex: none; }
.dialog h1 { font: 16px/24px "Noto Sans", sans-serif; padding-bottom: 2px; }
.name { display: flex; align-items: center; padding: 2px 0 0 4px; }
.name label { width: 34px; padding-top: 2px; }
.name input { width: 628px; height: 20px; border: 1px solid #d9dade; background: #fff; padding-left: 3px; font: 12px "Liberation Sans", sans-serif; }
.ops { display: flex; align-items: center; gap: 5px; padding: 9px 0 8px 9px; }
.ops span { width: 42px; }
.ops button, .actions button { height: 20px; border: 1px solid #d9dade; background: #fff; width: 80px; padding-top: 2px; display: block; }
.ops .w92 { width: 92px; }
.data { flex: 1; margin: 0 4px 0 4px; border: 1px solid #d2d2d4; background: linear-gradient(#e4e4e4, #e4e4e4) top / 100% 21px no-repeat; }
.data table { border-collapse: separate; border-spacing: 0; table-layout: fixed; width: 180px; }
.data th { font-weight: 400; background: #e4e4e4; }
.data th:first-child { width: 30px; }
.data th, .data td { padding: 0 1px; height: 20px; border: 1px solid #d2d2d4; border-width: 0 1px 1px 0; }
.data thead th { height: 21px; padding-top: 2px; border-right-color: #bab7b0; }
.data td { background: #fff; }
.data td:last-child { text-align: right; }
.actions { display: flex; justify-content: flex-end; gap: 10px; padding: 4px 14px 3px 0; }
.actions button { width: 56px; }
.actions button:first-child { width: 32px; }
.callout { position: absolute; left: 502px; top: 190px; width: 433px; height: 311px; border: 3px solid #fc4446; filter: drop-shadow(2px 4px 3px rgba(0, 0, 0, .5)); pointer-events: none; }
```
FILE: script.js
```javascript
const letters = 'ABCDEFGHIJKLMN'.split('');
const ns = 'http://www.w3.org/2000/svg';

const marks = document.getElementById('marks');
for (let v = 0; v <= 1200; v += 100) {
  const t = document.createElementNS(ns, 'text');
  t.setAttribute('x', 31 + v);
  t.setAttribute('y', 13);
  t.textContent = v;
  marks.append(t);
}

const grid = document.getElementById('grid');
const dots = '<svg width="11" height="9" viewBox="0 0 11 9"><path d="M0 1h11M0 4.500h11M0 8h11" stroke="#999" stroke-width="2" stroke-dasharray="2 2.500"/></svg>';
grid.tHead.innerHTML = '<tr><th>' + dots + '</th>' +
  letters.map((c, i) => `<th class="${i < 12 ? 'used' : ''}">${c}</th>`).join('') + '</tr>';

// The chart spans the first six columns of rows 1-20.
const chart = document.getElementById('chart').innerHTML;
let rows = '';
for (let r = 1; r <= 32; r++) {
  const cls = r === 11 ? 'current' : r <= 22 ? 'used' : '';
  const cells = r > 20 ? 14 : 8;
  rows += `<tr><th class="${cls}">${r}</th>` +
    (r === 1 ? `<td colspan="6" rowspan="20">${chart}</td>` : '') +
    '<td></td>'.repeat(cells) + '</tr>';
}
grid.tBodies[0].innerHTML = rows;
```
